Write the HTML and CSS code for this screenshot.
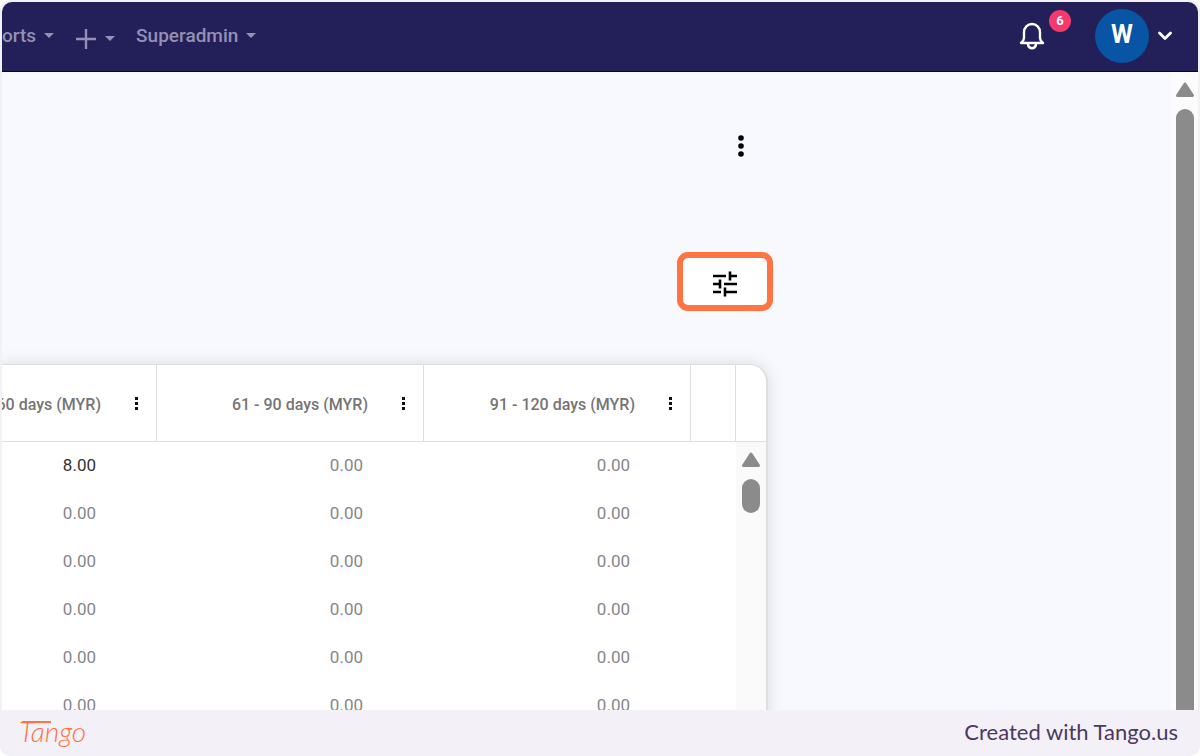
FILE: index.html
```html
<!DOCTYPE html>
<html lang="en">
<head>
  <meta charset="utf-8">
  <title>Report</title>
  <link rel="stylesheet" href="styles.css">
</head>
<body>

<div class="frame">
  <div class="app">
    <header class="topbar">
      <nav class="menu">
        <button class="menu-item">orts <span class="caret"></span></button>
        <button class="menu-item add" aria-label="Add">
          <svg width="22" height="22" viewBox="0 0 22 22"><path d="M11 1v20M1 11h20" stroke="currentColor" stroke-width="2.4"/></svg>
          <span class="caret"></span>
        </button>
        <button class="menu-item">Superadmin <span class="caret"></span></button>
      </nav>
      <div class="user">
        <button class="bell" aria-label="Notifications">
          <svg width="26" height="28" viewBox="0 0 26 28" fill="none" stroke="#fff" stroke-width="2.4" stroke-linecap="round" stroke-linejoin="round">
            <path d="M2 21h22c-2-1.600-3-2.800-3-5v-5.500C21 5.500 17.500 2 13 2s-8 3.500-8 8.500V16c0 2.200-1 3.400-3 5z"/>
            <path d="M9 22.500c.4 2.400 1.800 3.700 4 3.700s3.600-1.300 4-3.700"/>
          </svg>
          <span class="badge">6</span>
        </button>
        <button class="account" aria-label="Account">
          <span class="avatar">W</span>
          <svg width="14" height="10" viewBox="0 0 14 10"><path d="M1.500 2l5.500 5.500L12.500 2" fill="none" stroke="#fff" stroke-width="2.800" stroke-linecap="round" stroke-linejoin="round"/></svg>
        </button>
      </div>
    </header>

    <div class="page">
      <main class="report">
        <div class="actions">
          <button class="more" aria-label="More">
            <svg width="8" height="24" viewBox="0 0 8 24"><circle cx="4" cy="4" r="2.800"/><circle cx="4" cy="12" r="2.800"/><circle cx="4" cy="20" r="2.800"/></svg>
          </button>
          <button class="filter" aria-label="Column settings">
            <svg width="26" height="26" viewBox="0 0 26 26" fill="none" stroke="#000" stroke-width="2.600">
              <path d="M1 5h13M18 5h7M18 .5v9M1 13h7M12 13h13M8 8.500v9M1 21h8M13 21h12M13 16.500v9"/>
            </svg>
          </button>
        </div>

        <div class="panel">
          <table>
            <thead>
              <tr>
                <th class="first"><div class="head"><span>60 days (MYR)</span><button class="dots" aria-label="Column menu"><i></i><i></i><i></i></button></div></th>
                <th class="col"><div class="head"><span>61 - 90 days (MYR)</span><button class="dots" aria-label="Column menu"><i></i><i></i><i></i></button></div></th>
                <th class="col"><div class="head"><span>91 - 120 days (MYR)</span><button class="dots" aria-label="Column menu"><i></i><i></i><i></i></button></div></th>
                <th class="spacer"></th>
                <th class="gutter"></th>
              </tr>
            </thead>
            <tbody>
              <tr>
                <td class="strong">8.00</td><td>0.00</td><td>0.00</td><td class="blank"></td>
                <td class="track" rowspan="6">
                  <div class="scrollbar">
                    <svg width="20" height="16" viewBox="0 0 20 16"><path d="M10 2l7.500 11.500h-15z" fill="#8b8b8b" stroke="#8b8b8b" stroke-width="3" stroke-linejoin="round"/></svg>
                    <div class="thumb"></div>
                  </div>
                </td>
              </tr>
              <tr><td>0.00</td><td>0.00</td><td>0.00</td><td class="blank"></td></tr>
              <tr><td>0.00</td><td>0.00</td><td>0.00</td><td class="blank"></td></tr>
              <tr><td>0.00</td><td>0.00</td><td>0.00</td><td class="blank"></td></tr>
              <tr><td>0.00</td><td>0.00</td><td>0.00</td><td class="blank"></td></tr>
              <tr><td>0.00</td><td>0.00</td><td>0.00</td><td class="blank"></td></tr>
            </tbody>
          </table>
        </div>
      </main>

      <div class="scrollbar page-scroll">
        <svg width="20" height="16" viewBox="0 0 20 16"><path d="M10 2l7.500 11.500h-15z" fill="#8b8b8b" stroke="#8b8b8b" stroke-width="3" stroke-linejoin="round"/></svg>
        <div class="thumb"></div>
      </div>
    </div>
  </div>

  <footer class="credit">
    <a class="logo" href="#" aria-label="Tango">
      <svg width="76" height="40" viewBox="0 0 76 40">
        <path d="M4 11h29" stroke="#ff7442" stroke-width="2"/>
        <text x="1" y="31">Tango</text>
      </svg>
    </a>
    <span>Created with Tango.us</span>
  </footer>
</div>

</body>
</html>
```
FILE: styles.css
```css
* { box-sizing: border-box; }
body { margin: 0; background: #fff; font-family: Roboto, sans-serif; }
button { padding: 0; border: 0; background: none; font: inherit; color: inherit; cursor: pointer; }
svg { display: block; }

.frame { display: flex; flex-direction: column; height: 100vh; padding: 2px 2px 0; background: #f3f1f7; border-radius: 10px; overflow: hidden; }
.app { flex: 1; min-height: 0; display: flex; flex-direction: column; background: #f8f9fe; border-radius: 10px 10px 0 0; overflow: hidden; }

.topbar { display: flex; justify-content: space-between; flex: none; height: 70px; padding-right: 26px; background: #231f59; border-bottom: 1px solid #08052f; }
.menu { display: flex; align-items: center; gap: 21px; color: #9491b2; font-size: 19px; font-weight: 500; }
.menu-item { display: flex; align-items: center; gap: 8px; height: 70px; padding-bottom: 3px; }
.add { padding-top: 4px; padding-bottom: 0; }
.caret { border: 5px solid transparent; border-top-color: currentColor; border-bottom: 0; }
.user { display: flex; align-items: center; gap: 50px; padding-bottom: 2px; }
.bell { position: relative; }
.badge { position: absolute; top: -12px; right: -26px; width: 22px; height: 22px; border-radius: 50%; background: #f33a6a; color: #fff; font-size: 13px; font-weight: 700; line-height: 22px; text-align: center; }
.account { display: flex; align-items: center; gap: 9px; }
.avatar { width: 54px; height: 54px; border-radius: 50%; background: #0955a5; color: #fff; font-size: 25px; font-weight: 700; line-height: 51px; text-align: center; }

.page { flex: 1; min-height: 0; display: flex; justify-content: space-between; overflow: hidden; }
.actions { display: flex; flex-direction: column; align-items: flex-end; gap: 94px; padding-top: 62px; margin-bottom: 53px; }
.more { margin-right: 28px; }
.filter { display: flex; align-items: center; justify-content: center; width: 96px; height: 59px; padding-top: 4px; background: #fff; border: 6px solid #ff7442; border-radius: 11px; }

.panel { margin-right: 5px; background: #fff; border: 1px solid #dfdfe0; border-width: 1px 2px 0 0; border-radius: 0 18px 0 0; box-shadow: 0 0 16px rgba(60, 60, 80, 0.16); }
table { border-collapse: separate; border-spacing: 0; table-layout: fixed; }
th, td { padding: 0; }
th { height: 77px; border-right: 1px solid #dfdfe0; border-bottom: 1px solid #dfdfe0; color: #757575; font-size: 16px; font-weight: 500; }
.first { width: 155px; min-width: 155px; }
.col { width: 267px; min-width: 267px; }
.spacer { width: 45px; min-width: 45px; }
.gutter { width: 30px; min-width: 30px; border-right: 0; }
.head { display: flex; align-items: center; justify-content: flex-end; gap: 34px; height: 24px; padding-right: 18px; overflow: hidden; white-space: nowrap; }
.first .head { width: 154px; }
.head span { padding-top: 3px; }
.dots { display: flex; flex-direction: column; gap: 2px; }
.dots i { width: 3px; height: 3px; background: #111; }
td { height: 48px; padding: 0 61px 3px 0; color: #85878a; font-size: 17px; text-align: right; }
.strong { color: #333; }
.blank { padding: 0; }
.track { height: 100%; padding: 0; background: #fafafa; vertical-align: top; }

.scrollbar { display: flex; flex-direction: column; align-items: center; gap: 11px; padding-top: 10px; }
.scrollbar .thumb { width: 18px; height: 34px; border-radius: 9px; background: #8b8b8b; }
.page-scroll { width: 27px; background: #fcfcfc; }
.page-scroll .thumb { flex: 1; border-radius: 9px 9px 0 0; }

.credit { flex: none; display: flex; align-items: center; justify-content: space-between; height: 46px; padding: 0 20px 4px 16px; color: #4c3860; font-family: Lato, sans-serif; font-size: 22px; }
.logo text { fill: #ff7442; font-family: Lato, sans-serif; font-size: 28px; font-style: italic; font-weight: 300; }
```
